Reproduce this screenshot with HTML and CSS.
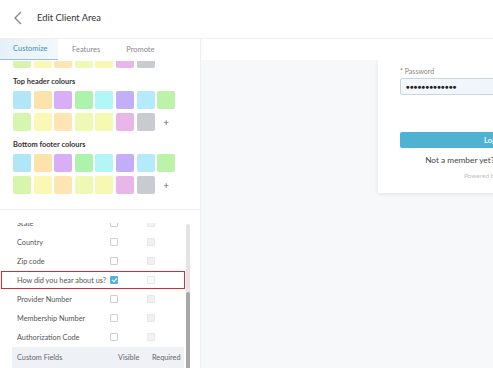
FILE: index.html
```html
<!DOCTYPE html>
<html lang="en">
<head>
    <meta charset="UTF-8">
    <meta name="viewport" content="width=device-width, initial-scale=1.0">
    <title>Edit Client Area</title>
    <link rel="stylesheet" href="styles.css">
</head>
<body>
    <!-- Barre du haut -->
    <header class="topbar">
        <svg class="back" width="10" height="14" viewBox="0 0 10 14"><path d="M8 1 L2 7 L8 13" fill="none" stroke="#8a8a8a" stroke-width="1.4"/></svg>
        <span class="title">Edit Client Area</span>
    </header>

    <div class="main">
        <!-- Panneau de gauche -->
        <aside class="side">
            <nav class="tabs">
                <span class="tab active">Customize</span>
                <span class="tab">Features</span>
                <span class="tab">Promote</span>
            </nav>

            <div class="swatches partial">
                <span class="sw" style="background:#d6f6ad"></span>
                <span class="sw" style="background:#fbf7b4"></span>
                <span class="sw" style="background:#fde6b4"></span>
                <span class="sw" style="background:#eff8b4"></span>
                <span class="sw" style="background:#f7f9b2"></span>
                <span class="sw" style="background:#e9b6ea"></span>
                <span class="sw" style="background:#c8cbcf"></span>
            </div>

            <h3 class="group-title first">Top header colours</h3>
            <div class="swatches">
                <span class="sw" style="background:#b0e6f8"></span>
                <span class="sw" style="background:#fde2ac"></span>
                <span class="sw" style="background:#d8aef7"></span>
                <span class="sw" style="background:#adf3ab"></span>
                <span class="sw" style="background:#b2f6f7"></span>
                <span class="sw" style="background:#c3aef9"></span>
                <span class="sw" style="background:#b5eafa"></span>
                <span class="sw" style="background:#bcf3a8"></span>
            </div>
            <div class="swatches">
                <span class="sw" style="background:#d6f6ad"></span>
                <span class="sw" style="background:#fbf7b4"></span>
                <span class="sw" style="background:#fde6b4"></span>
                <span class="sw" style="background:#eff8b4"></span>
                <span class="sw" style="background:#f7f9b2"></span>
                <span class="sw" style="background:#e9b6ea"></span>
                <span class="sw" style="background:#c8cbcf"></span>
                <span class="sw plus">+</span>
            </div>

            <h3 class="group-title">Bottom footer colours</h3>
            <div class="swatches">
                <span class="sw" style="background:#b0e6f8"></span>
                <span class="sw" style="background:#fde2ac"></span>
                <span class="sw" style="background:#d8aef7"></span>
                <span class="sw" style="background:#adf3ab"></span>
                <span class="sw" style="background:#b2f6f7"></span>
                <span class="sw" style="background:#c3aef9"></span>
                <span class="sw" style="background:#b5eafa"></span>
                <span class="sw" style="background:#bcf3a8"></span>
            </div>
            <div class="swatches">
                <span class="sw" style="background:#d6f6ad"></span>
                <span class="sw" style="background:#fbf7b4"></span>
                <span class="sw" style="background:#fde6b4"></span>
                <span class="sw" style="background:#eff8b4"></span>
                <span class="sw" style="background:#f7f9b2"></span>
                <span class="sw" style="background:#e9b6ea"></span>
                <span class="sw" style="background:#c8cbcf"></span>
                <span class="sw plus">+</span>
            </div>

            <!-- Champs du formulaire -->
            <div class="fields">
                <div class="field-list">
                    <div class="rows">
                        <div class="row"><span>State</span><i class="cb"></i><i class="cb off"></i></div>
                        <div class="row"><span>Country</span><i class="cb"></i><i class="cb off"></i></div>
                        <div class="row"><span>Zip code</span><i class="cb"></i><i class="cb off"></i></div>
                        <div class="row marked"><span>How did you hear about us?</span><i class="cb on"></i><i class="cb off light"></i></div>
                        <div class="row"><span>Provider Number</span><i class="cb"></i><i class="cb off"></i></div>
                        <div class="row"><span>Membership Number</span><i class="cb"></i><i class="cb off"></i></div>
                        <div class="row"><span>Authorization Code</span><i class="cb"></i><i class="cb off"></i></div>
                        <div class="row head"><span>Custom Fields</span><span class="h-vis">Visible</span><span class="h-req">Required</span></div>
                    </div>
                </div>
                <div class="scrollbar"><div class="thumb"></div></div>
            </div>
        </aside>

        <!-- Apercu -->
        <section class="preview">
            <div class="preview-top"></div>
            <div class="canvas">
                <div class="card">
                    <label class="pw-label"><b>*</b> Password</label>
                    <div class="pw-input">●●●●●●●●●●●●●</div>
                    <button class="login">Login</button>
                    <p class="member">Not a member yet? <a>create an account</a></p>
                    <p class="powered">Powered by Practice</p>
                </div>
            </div>
        </section>
    </div>
</body>
</html>
```

FILE: styles.css
```css
* {
    box-sizing: border-box;
    font-family: 'Lato', 'Liberation Sans', sans-serif;
}
body {
    margin: 0;
    width: 493px;
    height: 368px;
    overflow: hidden;
    background: #fff;
    color: #333;
}

/* Barre du haut */
.topbar {
    height: 39px;
    display: flex;
    align-items: center;
    padding-left: 13px;
    border-bottom: 1px solid #efefef;
}
.back {
    margin-top: -2px;
}
.title {
    margin-left: 14px;
    font-size: 9.4px;
    color: #333;
    margin-top: -3px;
}

.main {
    display: flex;
    height: 329px;
}

/* Panneau de gauche */
.side {
    width: 201px;
    flex: none;
    border-right: 1px solid #efefef;
    overflow: hidden;
}
.tabs {
    display: flex;
    height: 21px;
}
.tab {
    font-size: 7.5px;
    color: #888;
    line-height: 21px;
    padding: 0 13px;
    white-space: nowrap;
}
.tab.active {
    width: 58px;
    color: #4d8eb0;
    background: linear-gradient(to right, #e4f1f8, #f3f8fb);
    border-bottom: 1.5px solid #9cc0d2;
    line-height: 20px;
}
.tab + .tab {
    padding-left: 14px;
    padding-right: 12px;
}

.swatches {
    display: flex;
    gap: 2.6px;
    padding-left: 13px;
    height: 18px;
    margin-bottom: 4px;
}
.swatches.partial {
    height: 7px;
    overflow: hidden;
    align-items: flex-end;
    margin-top: 1px;
    margin-bottom: 0;
}
.sw {
    width: 18px;
    height: 18px;
    flex: none;
    border-radius: 2px;
}
.sw.plus {
    font-size: 10px;
    color: #666;
    text-align: center;
    line-height: 18px;
}
.group-title {
    font-size: 7.4px;
    font-weight: bold;
    color: #333;
    margin: 11px 0 4px 13px;
    line-height: 10px;
    white-space: nowrap;
}
.group-title.first {
    margin-top: 10px;
}
.swatches + .group-title {
    margin-top: 9px;
}

/* Liste des champs */
.fields {
    border-top: 1px solid #f0f0f0;
    margin-top: 15px;
    padding-top: 13px;
    display: flex;
}
.field-list {
    width: 186px;
    flex: none;
    height: 146px;
    overflow: hidden;
}
.rows {
    margin-top: -9.5px;
    margin-left: 12px;
    width: 172px;
}
.row {
    position: relative;
    height: 19px;
    display: flex;
    align-items: center;
    font-size: 7.3px;
    color: #555;
    padding-left: 5px;
}
.row span:first-child {
    width: 93px;
    flex: none;
    white-space: nowrap;
}
.cb {
    width: 8px;
    height: 8px;
    border: 1px solid #cfcfcf;
    border-radius: 1px;
    background: #fff;
    flex: none;
}
.cb + .cb {
    margin-left: 29px;
}
.cb.off {
    background: #f1f1f1;
    border-color: #e8e8e8;
}
.cb.off.light {
    background: #fafafa;
}
.cb.on {
    background: #5aaedc;
    border-color: #5aaedc;
    position: relative;
}
.cb.on::after {
    content: "";
    position: absolute;
    left: 2px;
    top: 0px;
    width: 2px;
    height: 4px;
    border: solid #fff;
    border-width: 0 1px 1px 0;
    transform: rotate(45deg);
}
.row.marked::before {
    content: "";
    position: absolute;
    left: -11px;
    right: -1px;
    top: 0.5px;
    bottom: 0.5px;
    border: 1.5px solid #cf2f3c;
}
.row.head {
    background: #eef1f6;
    height: 23px;
    color: #666;
    padding-bottom: 2px;
}
.h-vis {
    margin-left: 8px;
    width: 34px;
}

.scrollbar {
    width: 4px;
    flex: none;
    margin-top: 1px;
    height: 146px;
    background: #e4e4e4;
    border-radius: 2px;
    display: flex;
    flex-direction: column;
    justify-content: flex-end;
}
.thumb {
    height: 78px;
    background: #a8a8a8;
    border-radius: 2px;
}

/* Apercu */
.preview {
    flex: 1;
    display: flex;
    flex-direction: column;
    min-width: 0;
}
.preview-top {
    height: 21px;
    background: #fff;
}
.canvas {
    flex: 1;
    background: #f7f8fa;
    padding-left: 177px;
    overflow: hidden;
}
.card {
    width: 230px;
    height: 133px;
    background: #fff;
    box-shadow: 0 1px 5px rgba(0, 0, 0, 0.09);
    padding: 6px 22px 0 22px;
}
.pw-label {
    display: block;
    font-size: 7px;
    color: #888;
    line-height: 10px;
}
.pw-label b {
    color: #e05a5a;
    font-weight: normal;
}
.pw-input {
    margin-top: 2px;
    height: 17px;
    border: 1px solid #c9d6e0;
    border-radius: 2px;
    background: linear-gradient(to right, #f5f9fc, #e9f1fb);
    font-size: 6px;
    line-height: 15px;
    padding-left: 5px;
    color: #222;
    letter-spacing: 0.3px;
}
.login {
    display: block;
    width: 100%;
    margin-top: 37px;
    height: 16px;
    border: none;
    border-radius: 2px;
    background: #4fb2d3;
    color: #e9f6fb;
    font-size: 7.5px;
    font-weight: bold;
    padding: 0;
}
.member {
    margin: 6px 0 0 0;
    text-align: center;
    font-size: 8.3px;
    color: #444;
    line-height: 13px;
}
.member a {
    color: #4fa5cf;
}
.powered {
    margin: 5px 0 0 0;
    text-align: center;
    font-size: 6.5px;
    color: #c4c4c4;
}
```
